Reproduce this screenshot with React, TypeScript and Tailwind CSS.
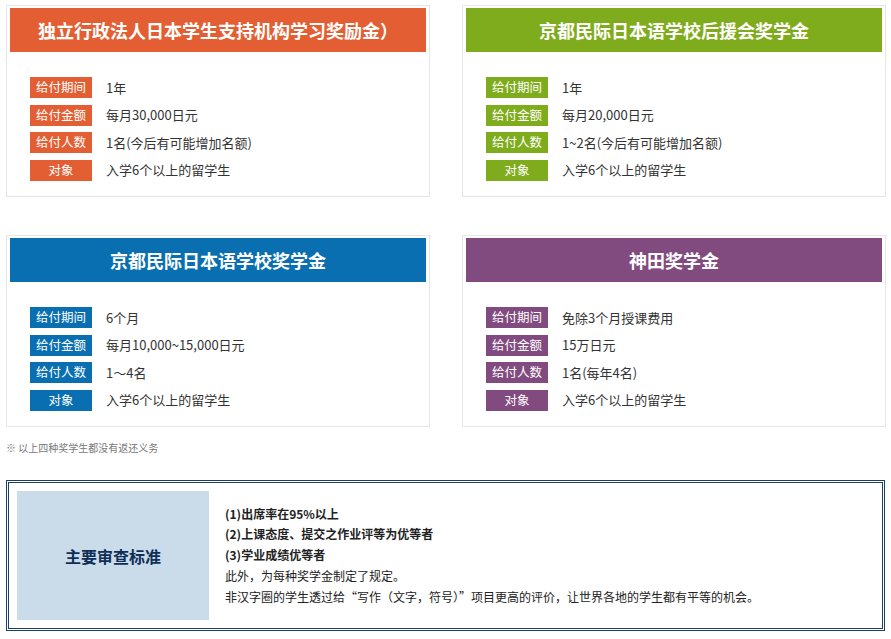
const F = { fontFamily: '"Noto Sans CJK SC","Noto Sans",sans-serif' };
type Card = { title: string; color: string; rows: [string, string][] };
const cards: Card[] = [
  { title: "独立行政法人日本学生支持机构学习奖励金）", color: "bg-[#e35f33]", rows: [["给付期间","1年"],["给付金额","每月30,000日元"],["给付人数","1名(今后有可能增加名额)"],["对象","入学6个以上的留学生"]] },
  { title: "京都民际日本语学校后援会奖学金", color: "bg-[#7fac1c]", rows: [["给付期间","1年"],["给付金额","每月20,000日元"],["给付人数","1~2名(今后有可能增加名额)"],["对象","入学6个以上的留学生"]] },
  { title: "京都民际日本语学校奖学金", color: "bg-[#0a6fb0]", rows: [["给付期间","6个月"],["给付金额","每月10,000~15,000日元"],["给付人数","1～4名"],["对象","入学6个以上的留学生"]] },
  { title: "神田奖学金", color: "bg-[#824b7f]", rows: [["给付期间","免除3个月授课费用"],["给付金额","15万日元"],["给付人数","1名(每年4名)"],["对象","入学6个以上的留学生"]] },
];
function C({ c }: { c: Card }) {
  return (
    <div className="border border-[#e6e6e6] h-[192px] px-[3px] pt-[2px]">
      <div className={`${c.color} h-[44px] flex items-center justify-center text-white text-[18px] font-bold`}>{c.title}</div>
      <div className="pl-[20px] pt-[25px] flex flex-col gap-[6.5px]">
        {c.rows.map(([k, v]) => (
          <div key={k} className="flex items-center h-[21px]">
            <div className={`${c.color} w-[62px] h-[21px] flex items-center justify-center text-white text-[12.5px]`}>{k}</div>
            <div className="ml-[14px] text-[13px] text-[#333]">{v}</div>
          </div>
        ))}
      </div>
    </div>
  );
}
export default function App() {
  return (
    <div style={F} className="w-[891px] h-[639px] bg-white pt-[5px] px-[6px] relative">
      <div className="grid grid-cols-[424px_424px] gap-x-[32px] gap-y-[38px]">
        {cards.map((c) => <C key={c.title} c={c} />)}
      </div>
      <div className="mt-[13px] text-[10px] text-[#777]">※ 以上四种奖学生都没有返还义务</div>
      <div className="mt-[25px] h-[151px] border-[3px] border-double border-[#1c3f66] p-[8px] flex">
        <div className="w-[192px] bg-[#cadbea] flex items-center justify-center text-[16px] font-bold text-[#0f2f57]">主要审查标准</div>
        <div className="ml-[16px] flex flex-col justify-center text-[12px] text-[#222] leading-[20.8px]">
          <div className="font-bold">(1)出席率在95%以上</div>
          <div className="font-bold">(2)上课态度、提交之作业评等为优等者</div>
          <div className="font-bold">(3)学业成绩优等者</div>
          <div>此外，为每种奖学金制定了规定。</div>
          <div>非汉字圈的学生透过给“写作（文字，符号）”项目更高的评价，让世界各地的学生都有平等的机会。</div>
        </div>
      </div>
    </div>
  );
}
